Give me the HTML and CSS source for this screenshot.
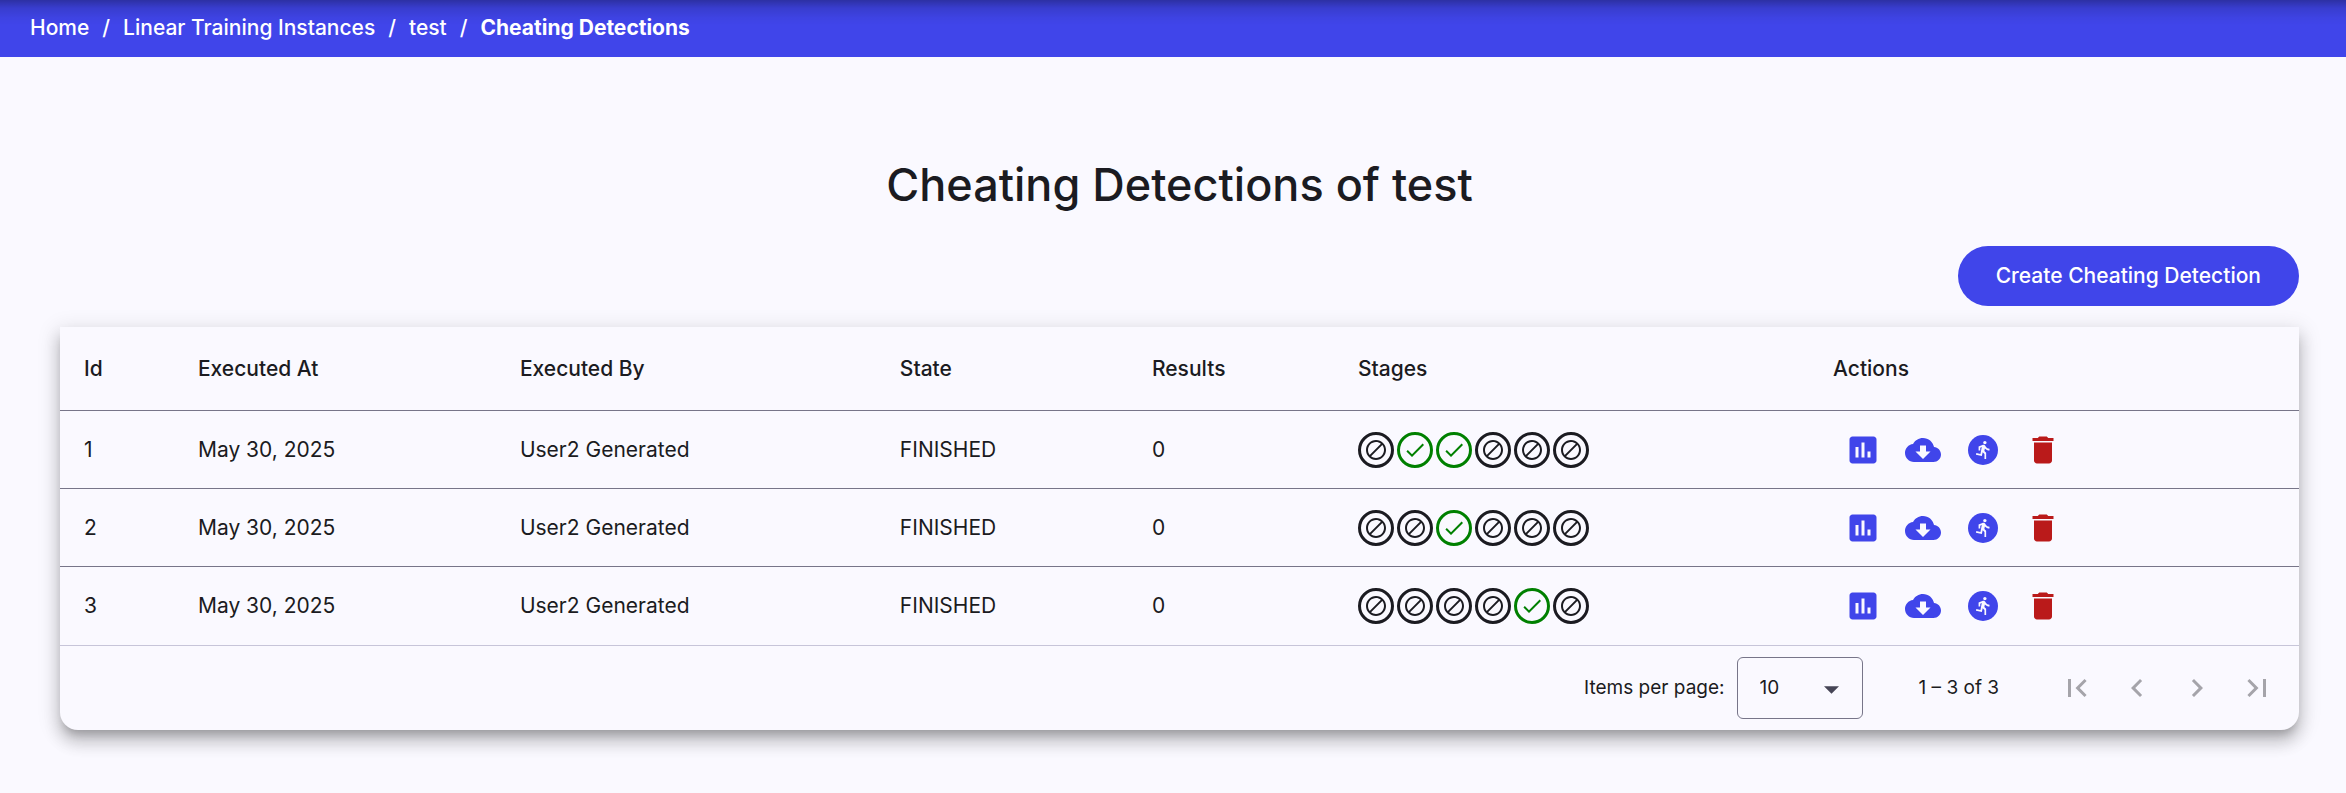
FILE: index.html
```html
<!DOCTYPE html>
<html lang="en">
<head>
<meta charset="utf-8">
<title>Cheating Detections</title>
<link rel="stylesheet" href="styles.css">
</head>
<body>
<svg class="sprite" aria-hidden="true">
  <symbol id="i-none" viewBox="0 0 24 24"><path d="M12 2C6.48 2 2 6.48 2 12s4.48 10 10 10 10-4.48 10-10S17.52 2 12 2zM4 12c0-4.420 3.580-8 8-8 1.850 0 3.550.63 4.900 1.690L5.690 16.900C4.630 15.550 4 13.850 4 12zm8 8c-1.850 0-3.550-.63-4.900-1.690L18.310 7.100C19.370 8.450 20 10.150 20 12c0 4.420-3.580 8-8 8z"/></symbol>
  <symbol id="i-check" viewBox="0 0 24 24"><path d="M9 16.170 4.830 12l-1.420 1.410L9 19 21 7l-1.410-1.410z"/></symbol>
  <symbol id="i-chart" viewBox="0 0 24 24"><path d="M19 3H5c-1.100 0-2 .9-2 2v14c0 1.100.9 2 2 2h14c1.100 0 2-.9 2-2V5c0-1.100-.9-2-2-2zM9 17H7v-7h2v7zm4 0h-2V7h2v10zm4 0h-2v-4h2v4z"/></symbol>
  <symbol id="i-cloud" viewBox="0 0 24 24"><path d="M19.350 10.040C18.670 6.590 15.640 4 12 4 9.110 4 6.600 5.640 5.350 8.040 2.340 8.360 0 10.910 0 14c0 3.310 2.690 6 6 6h13c2.760 0 5-2.240 5-5 0-2.640-2.050-4.780-4.650-4.960zM17 13l-5 5-5-5h3V9h4v4h3z"/></symbol>
  <symbol id="i-run" viewBox="0 0 24 24"><circle cx="12" cy="12" r="10"/><path fill="#faf9ff" transform="translate(5.7 5.1) scale(.56)" d="M13.490 5.480c1.100 0 2-.9 2-2s-.9-2-2-2-2 .9-2 2 .9 2 2 2zm-3.600 13.900 1-4.400 2.100 2v6h2v-7.500l-2.100-2 .6-3c1.300 1.500 3.300 2.500 5.500 2.500v-2c-1.900 0-3.500-1-4.300-2.400l-1-1.600c-.4-.6-1-1-1.700-1-.3 0-.5.1-.8.1l-5.200 2.200v4.700h2v-3.400l1.800-.7-1.600 8.100-4.900-1-.4 2 7 1.400z"/></symbol>
  <symbol id="i-trash" viewBox="0 0 24 24"><path d="M6 19c0 1.100.9 2 2 2h8c1.100 0 2-.9 2-2V7H6v12zM19 4h-3.500l-1-1h-5l-1 1H5v2h14V4z"/></symbol>
  <symbol id="i-first" viewBox="0 0 24 24"><path d="M18.410 16.590 13.820 12l4.590-4.590L17 6l-6 6 6 6zM6 6h2v12H6z"/></symbol>
  <symbol id="i-prev" viewBox="0 0 24 24"><path d="M15.410 7.410 14 6l-6 6 6 6 1.410-1.410L10.830 12z"/></symbol>
  <symbol id="i-next" viewBox="0 0 24 24"><path d="M10 6 8.590 7.410 13.170 12l-4.580 4.590L10 18l6-6z"/></symbol>
  <symbol id="i-last" viewBox="0 0 24 24"><path d="M5.590 7.410 10.180 12l-4.590 4.590L7 18l6-6-6-6zM16 6h2v12h-2z"/></symbol>
</svg>

<nav class="breadcrumbs" aria-label="Breadcrumb">
  <a href="#">Home</a><span>/</span><a href="#">Linear Training Instances</a><span>/</span><a href="#">test</a><span>/</span><a class="current" href="#" aria-current="page">Cheating Detections</a>
</nav>

<main class="page">
  <h1>Cheating Detections of test</h1>
  <div class="toolbar"><button class="create" type="button">Create Cheating Detection</button></div>

  <section class="card">
    <table>
      <colgroup><col class="c-id"><col class="c-at"><col class="c-by"><col class="c-state"><col class="c-results"><col class="c-stages"><col class="c-actions"></colgroup>
      <thead>
        <tr><th>Id</th><th>Executed At</th><th>Executed By</th><th>State</th><th>Results</th><th>Stages</th><th>Actions</th></tr>
      </thead>
      <tbody>
        <tr>
          <td>1</td><td>May 30, 2025</td><td>User2 Generated</td><td>FINISHED</td><td>0</td>
          <td><div class="stages">
            <span class="stage"><svg><use href="#i-none"/></svg></span><span class="stage done"><svg><use href="#i-check"/></svg></span><span class="stage done"><svg><use href="#i-check"/></svg></span><span class="stage"><svg><use href="#i-none"/></svg></span><span class="stage"><svg><use href="#i-none"/></svg></span><span class="stage"><svg><use href="#i-none"/></svg></span>
          </div></td>
          <td><div class="actions">
            <button type="button" aria-label="Results"><svg><use href="#i-chart"/></svg></button><button type="button" aria-label="Download"><svg><use href="#i-cloud"/></svg></button><button type="button" aria-label="Run"><svg><use href="#i-run"/></svg></button><button class="danger" type="button" aria-label="Delete"><svg><use href="#i-trash"/></svg></button>
          </div></td>
        </tr>
        <tr>
          <td>2</td><td>May 30, 2025</td><td>User2 Generated</td><td>FINISHED</td><td>0</td>
          <td><div class="stages">
            <span class="stage"><svg><use href="#i-none"/></svg></span><span class="stage"><svg><use href="#i-none"/></svg></span><span class="stage done"><svg><use href="#i-check"/></svg></span><span class="stage"><svg><use href="#i-none"/></svg></span><span class="stage"><svg><use href="#i-none"/></svg></span><span class="stage"><svg><use href="#i-none"/></svg></span>
          </div></td>
          <td><div class="actions">
            <button type="button" aria-label="Results"><svg><use href="#i-chart"/></svg></button><button type="button" aria-label="Download"><svg><use href="#i-cloud"/></svg></button><button type="button" aria-label="Run"><svg><use href="#i-run"/></svg></button><button class="danger" type="button" aria-label="Delete"><svg><use href="#i-trash"/></svg></button>
          </div></td>
        </tr>
        <tr>
          <td>3</td><td>May 30, 2025</td><td>User2 Generated</td><td>FINISHED</td><td>0</td>
          <td><div class="stages">
            <span class="stage"><svg><use href="#i-none"/></svg></span><span class="stage"><svg><use href="#i-none"/></svg></span><span class="stage"><svg><use href="#i-none"/></svg></span><span class="stage"><svg><use href="#i-none"/></svg></span><span class="stage done"><svg><use href="#i-check"/></svg></span><span class="stage"><svg><use href="#i-none"/></svg></span>
          </div></td>
          <td><div class="actions">
            <button type="button" aria-label="Results"><svg><use href="#i-chart"/></svg></button><button type="button" aria-label="Download"><svg><use href="#i-cloud"/></svg></button><button type="button" aria-label="Run"><svg><use href="#i-run"/></svg></button><button class="danger" type="button" aria-label="Delete"><svg><use href="#i-trash"/></svg></button>
          </div></td>
        </tr>
      </tbody>
    </table>

    <footer class="paginator">
      <label for="page-size">Items per page:</label>
      <div class="select">
        <select id="page-size"><option>10</option></select>
        <svg class="arrow" viewBox="0 0 14 7"><path d="M0 0h14L7 7z"/></svg>
      </div>
      <span class="range">1 – 3 of 3</span>
      <div class="pages">
        <button type="button" aria-label="First page" disabled><svg><use href="#i-first"/></svg></button><button type="button" aria-label="Previous page" disabled><svg><use href="#i-prev"/></svg></button><button type="button" aria-label="Next page" disabled><svg><use href="#i-next"/></svg></button><button type="button" aria-label="Last page" disabled><svg><use href="#i-last"/></svg></button>
      </div>
    </footer>
  </section>
</main>
</body>
</html>
```
FILE: styles.css
```css
* {
  box-sizing: border-box;
}

body {
  margin: 0;
  background: #faf9ff;
  color: #1b1b21;
  font-family: Inter, "Liberation Sans", sans-serif;
  font-size: 21px;
  line-height: 30px;
}

svg {
  display: block;
  fill: currentColor;
}

button,
select {
  font: inherit;
  color: inherit;
  border: 0;
  padding: 0;
  background: none;
}

.sprite {
  position: absolute;
  width: 0;
  height: 0;
}

.breadcrumbs {
  display: flex;
  align-items: center;
  gap: 13px;
  height: 57px;
  padding: 0 30px 2px;
  background: #4045ea linear-gradient(rgba(0, 0, 0, 0.3), rgba(0, 0, 0, 0.12) 8px, rgba(0, 0, 0, 0.03) 18px, transparent 26px);
  color: #fff;
  font-weight: 500;
}

.breadcrumbs a {
  color: inherit;
  text-decoration: none;
}

.breadcrumbs .current {
  font-weight: 700;
}

.page {
  padding: 96px 47px 63px 60px;
}

h1 {
  margin: 0;
  font-size: 45px;
  line-height: 64px;
  font-weight: 500;
  text-align: center;
}

.toolbar {
  display: flex;
  justify-content: flex-end;
  padding: 29px 0 21px;
}

.create {
  height: 60px;
  padding: 0 38px;
  border-radius: 30px;
  background: #4045ea;
  color: #fff;
  font-weight: 500;
}

.card {
  border-radius: 0 0 18px 18px;
  background: #faf9ff;
  box-shadow: 0 8px 8px -4px rgba(0, 0, 0, 0.2), 0 12px 15px 2px rgba(0, 0, 0, 0.14), 0 5px 21px 3px rgba(0, 0, 0, 0.12);
}

table {
  width: 100%;
  table-layout: fixed;
  border-collapse: separate;
  border-spacing: 0;
}

.c-id { width: 5.09%; }
.c-at { width: 14.38%; }
.c-by { width: 16.97%; }
.c-state { width: 11.26%; }
.c-results { width: 9.2%; }
.c-stages { width: 21.22%; }
.c-actions { width: 21.88%; }

th,
td {
  height: 78px;
  padding: 0 24px;
  border-bottom: 1px solid #777589;
  text-align: left;
  font-weight: 400;
}

th {
  height: 84px;
  font-weight: 500;
}

tbody tr:last-child td {
  border-bottom: 0;
}

.stages {
  display: flex;
  gap: 3px;
}

.stage {
  display: grid;
  place-items: center;
  width: 36px;
  height: 36px;
  border: 3px solid currentColor;
  border-radius: 50%;
}

.stage svg {
  width: 24px;
  height: 24px;
}

.done {
  color: #008000;
}

.actions {
  display: flex;
}

.actions button {
  display: grid;
  place-items: center;
  width: 60px;
  height: 60px;
  color: #4045ea;
}

.actions svg,
.pages svg {
  width: 36px;
  height: 36px;
}

.actions .danger {
  color: #ba1a1a;
}

.paginator {
  display: flex;
  align-items: center;
  justify-content: flex-end;
  height: 85px;
  padding-right: 12px;
  border-top: 1px solid #c7c5d9;
  font-size: 19px;
}

.select {
  position: relative;
  margin: 0 56px 0 12px;
}

.select select {
  display: block;
  appearance: none;
  width: 126px;
  height: 62px;
  padding: 0 22px;
  border: 1px solid #777589;
  border-radius: 6px;
}

.arrow {
  position: absolute;
  top: 29px;
  right: 24px;
  width: 15px;
  height: 8px;
  fill: #464556;
  pointer-events: none;
}

.pages {
  display: flex;
  margin-left: 48px;
}

.pages button {
  display: grid;
  place-items: center;
  width: 60px;
  height: 60px;
  color: #a5a4aa;
}
```
